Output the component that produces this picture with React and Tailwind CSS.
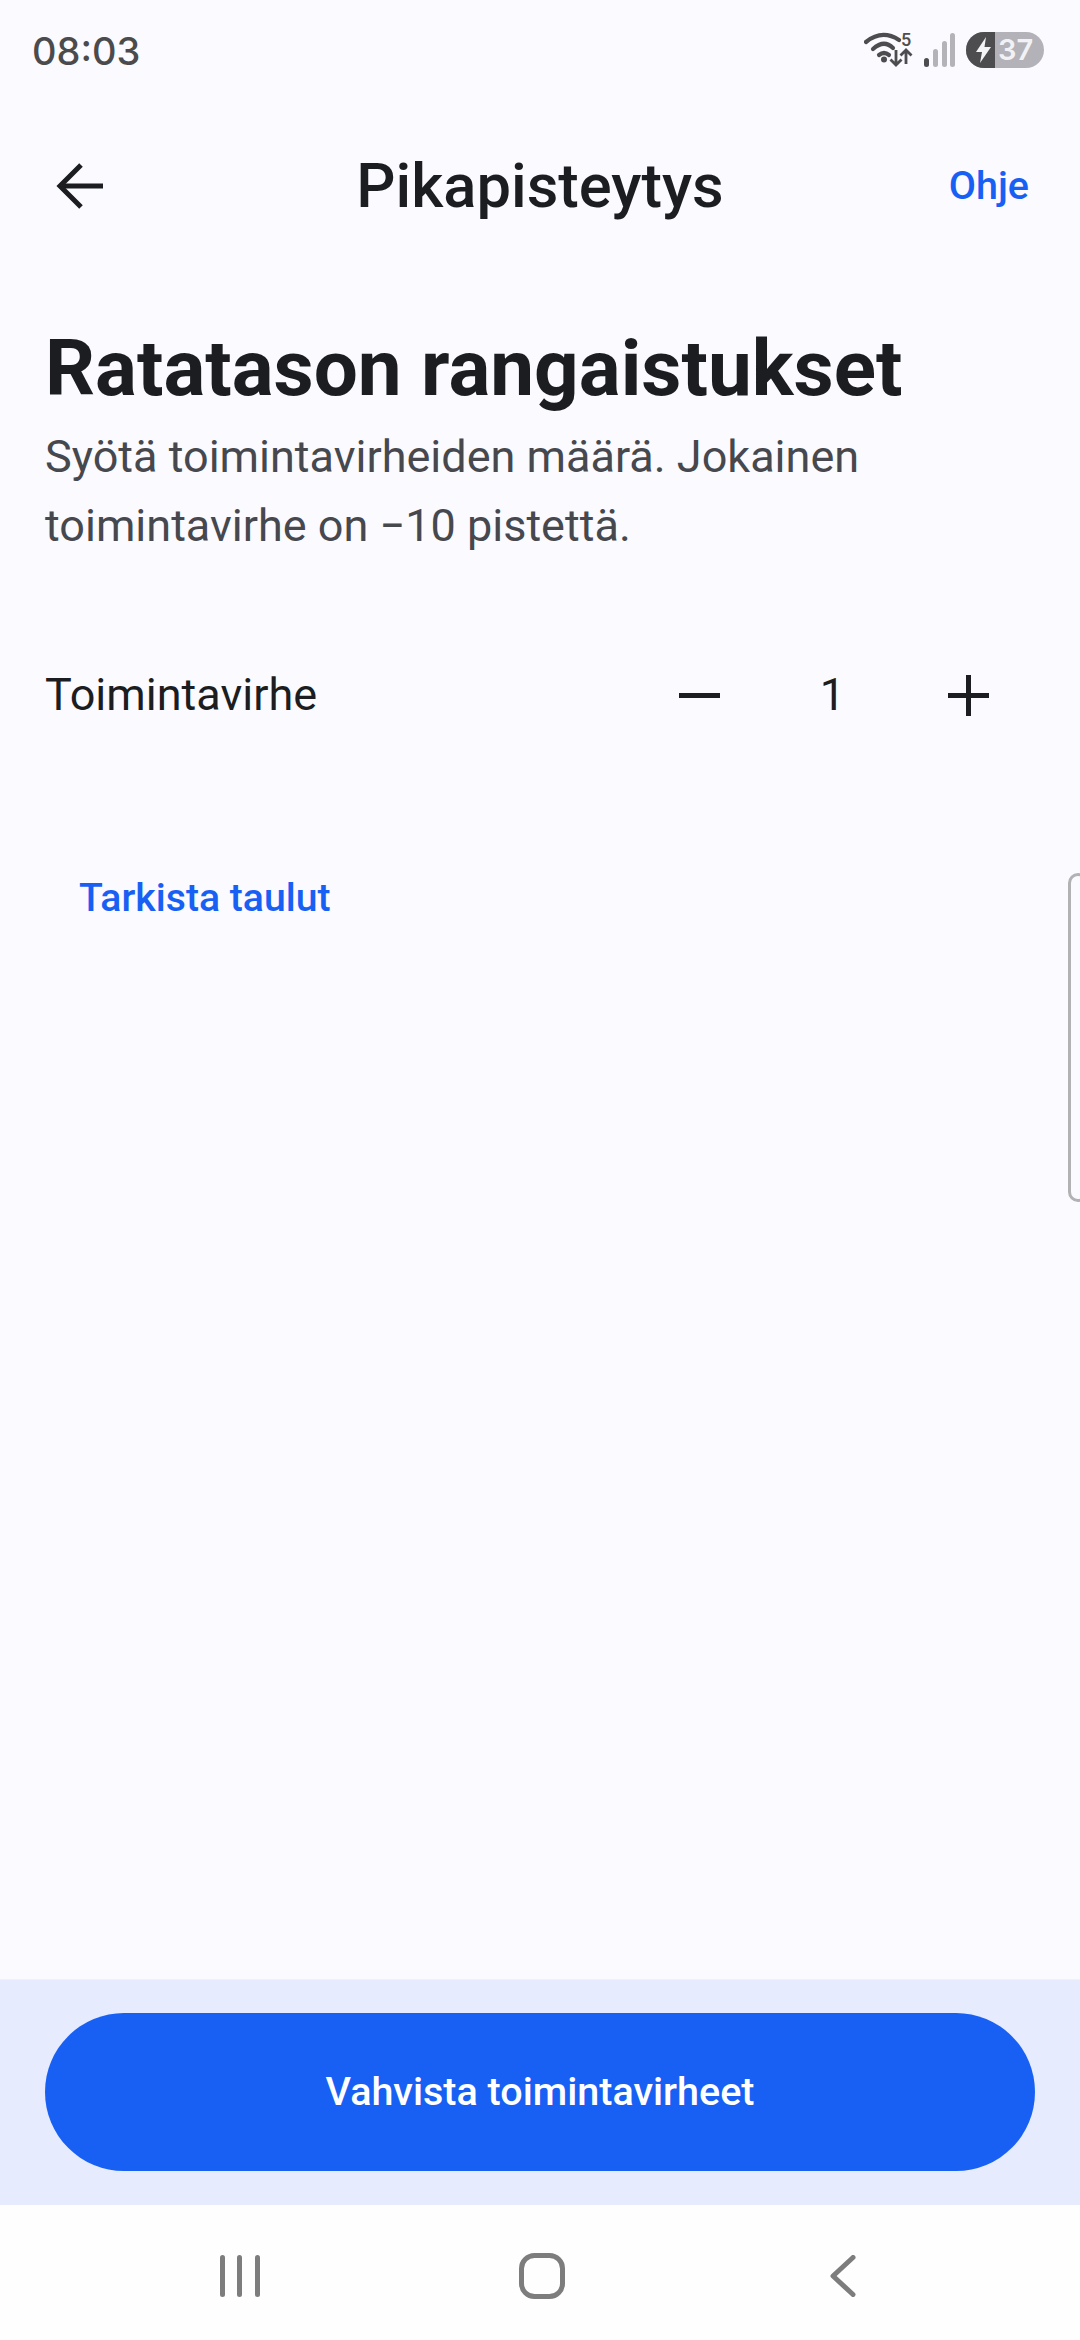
import React from "react";

function WifiIcon() {
  return (
    <svg width="50" height="44" viewBox="0 -4 50 44" className="-my-[4px] block">
      {/* wifi arcs */}
      <g fill="none" stroke="#4d4d4f" strokeWidth="4.2" strokeLinecap="round">
        <path d="M2 10 Q18 -3 35 8" />
        <path d="M9 17 Q20 7 29 16" />
        <path d="M15 23 Q20 19 25 23" />
      </g>
      <circle cx="20" cy="27.5" r="3" fill="#4d4d4f" />
      {/* arrows */}
      <g fill="none" stroke="#4d4d4f" strokeWidth="2.8">
        <path d="M32 18 V33 M26.5 27.5 L32 33 L37.5 27.5" />
        <path d="M42 32 V18 M36.5 23.5 L42 18 L47.5 23.5" />
      </g>
      <text x="37" y="13.5" fontSize="18" fontWeight="500" fill="#4d4d4f" fontFamily="Roboto, sans-serif">5</text>
    </svg>
  );
}

function Signal() {
  return (
    <svg width="31" height="34" viewBox="0 0 31 34" className="block">
      <rect x="0" y="25" width="5" height="9" rx="2.5" fill="#4d4d4f" />
      <rect x="9" y="16" width="5" height="18" rx="2.5" fill="#b4b4b8" />
      <rect x="18" y="8" width="5" height="26" rx="2.5" fill="#b4b4b8" />
      <rect x="26" y="0" width="5" height="34" rx="2.5" fill="#b4b4b8" />
    </svg>
  );
}

function Battery() {
  return (
    <div className="flex h-[36px] w-[78px] overflow-hidden rounded-full bg-[#b3b2b8]">
      <div className="flex h-full w-[29px] items-center justify-center bg-[#4d4d4f] pl-[5px]">
        <svg width="17" height="26" viewBox="0 0 17 26">
          <path d="M11 0 L1 15 H7 L5 26 L16 10 H9.5 Z" fill="#f4f4f6" />
        </svg>
      </div>
      <div className="flex-1 pl-[3px] font-['Inter',sans-serif] text-[29px] font-semibold leading-[36px] text-[#f2f2f6]">
        37
      </div>
    </div>
  );
}

function App() {
  return (
    <div className="relative flex h-[2340px] w-[1080px] flex-col overflow-hidden bg-[#fafaff] font-['Roboto',sans-serif] text-[#1b1d21]">
      {/* status bar */}
      <div className="flex h-[100px] items-center justify-between pl-[32px] pr-[36px]">
        <span className="mt-[2px] font-['Inter',sans-serif] text-[38px] font-medium text-[#4b4b4d]">
          08:03
        </span>
        <div className="flex items-center">
          <WifiIcon />
          <div className="ml-[10px] mr-[11px]">
            <Signal />
          </div>
          <Battery />
        </div>
      </div>

      {/* app bar */}
      <div className="relative flex h-[172px] items-center justify-between pl-[56px] pr-[51px]">
        <svg width="48" height="48" viewBox="0 0 48 48" fill="none" stroke="#1b1d21" strokeWidth="5" strokeLinejoin="miter">
          <path d="M47 24 H4" />
          <path d="M25 3 L4 24 L25 45" />
        </svg>
        <span className="text-[39.5px] font-medium text-[#1860f4]">Ohje</span>
        <div className="absolute inset-0 flex items-center justify-center text-[61.5px] font-medium">
          Pikapisteytys
        </div>
      </div>

      {/* intro */}
      <div className="px-[45px] pt-[43px]">
        <h1 className="text-[78.2px] font-bold leading-[107px]">Ratatason rangaistukset</h1>
        <p className="text-[45px] leading-[69px] text-[#46484e]">
          Syötä toimintavirheiden määrä. Jokainen
          <br />
          toimintavirhe on −10 pistettä.
        </p>
      </div>

      {/* counter row */}
      <div className="mt-[95px] flex h-[80px] items-center pl-[45px] pr-[91px]">
        <span className="flex-1 text-[45px]">Toimintavirhe</span>
        <div className="flex items-center">
          <div className="h-[5px] w-[41px] bg-[#1b1d21]"></div>
          <span className="w-[228px] pr-[3px] text-center text-[45px]">1</span>
          <svg width="41" height="41" viewBox="0 0 41 41" fill="#1b1d21">
            <rect x="0" y="18" width="41" height="5" />
            <rect x="18" y="0" width="5" height="41" />
          </svg>
        </div>
      </div>

      <div className="mt-[134px] pl-[79px] text-[39.2px] font-medium text-[#1860f4]">
        Tarkista taulut
      </div>

      {/* edge panel handle */}
      <div className="absolute left-[1068px] top-[873px] h-[329px] w-[20px] rounded-[12px] border-[3px] border-[#b2b2b4]"></div>

      <div className="flex-1"></div>

      {/* footer */}
      <div className="border-t border-[#f1f1f8] bg-[#e6ebfd] px-[45px] pb-[34px] pt-[33px]">
        <button className="flex h-[158px] w-full items-center justify-center rounded-full bg-[#1860f4] text-[39.5px] font-medium text-white">
          Vahvista toimintavirheet
        </button>
      </div>

      {/* system nav */}
      <div className="flex h-[135px] items-start justify-between bg-[#fefefe] pl-[220px] pr-[224px] pt-[50px]">
        <svg width="40" height="42" viewBox="0 0 40 42" fill="#7d7d7d">
          <rect x="0" y="0" width="5" height="42" rx="2.5" />
          <rect x="17" y="0" width="5" height="42" rx="2.5" />
          <rect x="35" y="0" width="5" height="42" rx="2.5" />
        </svg>
        <svg width="46" height="46" viewBox="0 0 46 46" fill="none" stroke="#7d7d7d" strokeWidth="5" className="-mt-[2px] mr-[7px]">
          <rect x="2.5" y="2.5" width="41" height="41" rx="13" />
        </svg>
        <svg width="26" height="42" viewBox="0 0 26 42" fill="none" stroke="#7d7d7d" strokeWidth="5" strokeLinecap="round" strokeLinejoin="round">
          <path d="M23 2.5 L3 21 L23 39.5" />
        </svg>
      </div>
    </div>
  );
}

export default App;
